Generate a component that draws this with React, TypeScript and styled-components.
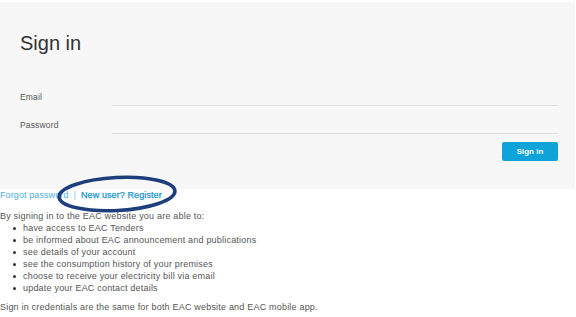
import React from "react";
import styled, { createGlobalStyle } from "styled-components";

const Global = createGlobalStyle`
  html, body { margin: 0; padding: 0; background: #fff; }
  body { font-family: "Liberation Sans", Arial, sans-serif; }
`;

const Page = styled.div`
  width: 576px;
  height: 317px;
  overflow: hidden;
  padding-top: 2px;
  box-sizing: border-box;
`;

const Panel = styled.section`
  background: #f7f7f7;
  margin-right: 1px;
  padding: 29px 17px 28px 20px;
  display: flex;
  flex-direction: column;
`;

const Title = styled.h1`
  margin: 0 0 32px 0;
  font-size: 20px;
  line-height: 24px;
  font-weight: 400;
  color: #333;
`;

const Row = styled.label`
  display: grid;
  grid-template-columns: 92px 1fr;
  align-items: center;
  height: 19px;
  margin-bottom: 9px;
`;

const Label = styled.span`
  font-size: 8.5px;
  color: #555;
  line-height: 12px;
  letter-spacing: 0.15px;
`;

const Field = styled.input`
  height: 18px;
  border: none;
  border-bottom: 1.5px solid #dedede;
  background: transparent;
  outline: none;
  padding: 0;
`;

const Actions = styled.div`
  display: flex;
  justify-content: flex-end;
  margin-top: -1px;
`;

const Button = styled.button`
  width: 56px;
  height: 19px;
  border: none;
  border-radius: 2px;
  background: #0ea3d9;
  color: #fff;
  font-family: "Liberation Sans", Arial, sans-serif;
  font-weight: 700;
  font-size: 8px;
  padding: 0;
`;

const Links = styled.div`
  position: relative;
  font-size: 9px;
  line-height: 12px;
  height: 12px;
  white-space: nowrap;
  letter-spacing: 0.1px;
`;

const Link = styled.a<{ $strong?: boolean }>`
  color: ${(p) => (p.$strong ? "#1796d2" : "#4db1e0")};
  text-decoration: none;
  ${(p) => (p.$strong ? "-webkit-text-stroke: 0.25px #1796d2;" : "")}
`;

const Sep = styled.span`
  color: #7fc4e8;
  margin: 0 5px;
`;

const Circle = styled.svg`
  position: absolute;
  left: 55px;
  top: -15px;
  overflow: visible;
  pointer-events: none;
`;

const Info = styled.div`
  font-size: 9px;
  line-height: 12px;
  color: #555;
  margin-top: 9px;
  letter-spacing: 0.2px;
`;

const Intro = styled.p`
  margin: 0;
`;

const List = styled.ul`
  margin: 0;
  padding: 0 0 0 23px;
  list-style: none;
`;

const Item = styled.li`
  position: relative;
  &::before {
    content: "";
    position: absolute;
    left: -10px;
    top: 4.5px;
    width: 3px;
    height: 3px;
    border-radius: 50%;
    background: #333;
  }
`;

const Note = styled.p`
  margin: 7px 0 0 0;
`;

const items = [
  "have access to EAC Tenders",
  "be informed about EAC announcement and publications",
  "see details of your account",
  "see the consumption history of your premises",
  "choose to receive your electricity bill via email",
  "update your EAC contact details",
];

export default function App() {
  return (
    <Page>
      <Global />
      <Panel>
        <Title>Sign in</Title>
        <Row>
          <Label>Email</Label>
          <Field type="text" />
        </Row>
        <Row>
          <Label>Password</Label>
          <Field type="password" />
        </Row>
        <Actions>
          <Button>Sign in</Button>
        </Actions>
      </Panel>
      <Links>
        <Link href="#">Forgot password</Link>
        <Sep>|</Sep>
        <Link href="#" $strong>New user? Register</Link>
        <Circle width="124" height="40" viewBox="0 0 124 40">
          <ellipse
            cx="62"
            cy="20"
            rx="58"
            ry="16.5"
            fill="none"
            stroke="#1f3f7c"
            strokeWidth="3.6"
            transform="rotate(-3 62 20)"
          />
        </Circle>
      </Links>
      <Info>
        <Intro>By signing in to the EAC website you are able to:</Intro>
        <List>
          {items.map((t) => (
            <Item key={t}>{t}</Item>
          ))}
        </List>
        <Note>Sign in credentials are the same for both EAC website and EAC mobile app.</Note>
      </Info>
    </Page>
  );
}
